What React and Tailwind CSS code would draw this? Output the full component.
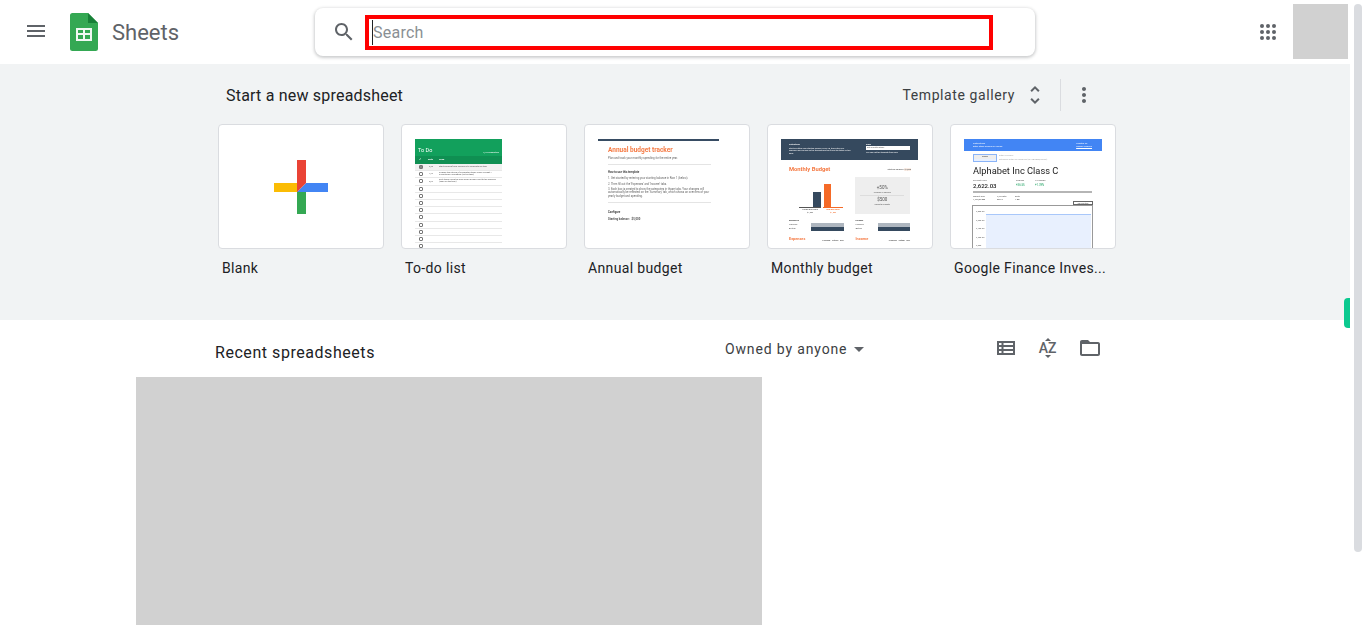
import { useState } from 'react';

const templates = ['Blank', 'To-do list', 'Annual budget', 'Monthly budget', 'Google Finance Inves...'];

const todoRows = [
    ['3/8', 'Start working from column D to complete an item', 'bg-[#f1f1f1]'],
    ['4/9', 'Change the styling of completed items under Format > Conditional Formatting (on the task)', ''],
    ['5/9', 'Sort items using the drop-down arrows next to the heading (seen on the task)', ''],
    ['', '', ''], ['', '', ''], ['', '', ''], ['', '', ''], ['', '', ''], ['', '', ''], ['', '', ''], ['', '', ''], ['', '', ''],
];

function Icon({ d, size = 24, className = 'fill-[#5f6368]' }) {
    return (
        <svg viewBox="0 0 24 24" width={size} height={size} className={`shrink-0 ${className}`}>
            <path d={d} />
        </svg>
    );
}

function SheetsLogo() {
    return (
        <svg viewBox="0 0 28 38" width="28" height="38" className="shrink-0">
            <path d="M2.5 0H18l10 10v25.500a2.500 2.500 0 0 1-2.500 2.500h-23A2.500 2.500 0 0 1 0 35.500v-33A2.500 2.500 0 0 1 2.500 0z" fill="#34a853" />
            <path d="M18 0l10 10h-10z" fill="#188038" />
            <path d="M6 15h16v13H6zM8 17v3h5v-3zm7 0v3h5v-3zM8 22v4h5v-4zm7 0v4h5v-4z" fill="#f1f8f3" fillRule="evenodd" />
        </svg>
    );
}

function BlankPlus() {
    return (
        <svg viewBox="0 0 54 54" width="54" height="54">
            <rect x="0" y="23" width="24" height="9" fill="#fbbc04" />
            <path d="M23 32h9v22h-9z" fill="#34a853" />
            <path d="M23 32l9-9h22v9z" fill="#4285f4" />
            <path d="M23 0h9v23l-9 9z" fill="#ea4335" />
        </svg>
    );
}

function TodoPreview() {
    return (
        <div className="w-[87px] flex flex-col blur-[0.4px]">
            <div className="h-[17px] bg-[#12a05c] flex items-end justify-between px-[3px] pb-[1px] text-white">
                <span className="text-[5.500px] leading-[9px]">To Do</span>
                <span className="text-[2.500px] leading-[5px]">1/3 completed</span>
            </div>
            <div className="h-[8px] bg-[#0f8f52] flex items-center text-white text-[2.500px] font-bold px-[4px]">
                <span className="w-[9px]">✓</span>
                <span className="w-[11px]">Date</span>
                <span>Task</span>
            </div>
            {todoRows.map((row, i) => (
                <div key={i} className={`h-[7.200px] flex items-center border-b border-[#e8e8e8] px-[4px] ${row[2]}`}>
                    <span className={`w-[4px] h-[4px] border-[0.5px] border-[#777] rounded-[1px] shrink-0 ${i === 0 ? 'bg-[#888]' : ''}`} />
                    <span className="w-[16px] text-center text-[2.500px] text-[#555] shrink-0">{row[0]}</span>
                    <span className="text-[2.200px] leading-[2.400px] text-[#555]">{row[1]}</span>
                </div>
            ))}
        </div>
    );
}

function AnnualPreview() {
    return (
        <div className="w-[121px] flex flex-col blur-[0.4px] text-[#666]">
            <div className="h-[2px] bg-[#374c63]" />
            <div className="pl-[10px] pr-[8px] flex flex-col">
                <p className="mt-[5px] text-[6.500px] leading-[8px] font-bold text-[#f57b45]">Annual budget tracker</p>
                <p className="mt-[2px] text-[2.800px] leading-[4px]">Plan and track your monthly spending for the entire year.</p>
                <div className="mt-[4px] h-px bg-[#e4e4e4]" />
                <p className="mt-[5px] text-[2.800px] leading-[4px] font-bold text-[#444]">How to use this template</p>
                <p className="mt-[2px] text-[2.800px] leading-[4px]">1. Get started by entering your starting balance in Row 1 (below).</p>
                <p className="mt-[2px] text-[2.800px] leading-[4px]">2. Then fill out the 'Expenses' and 'Income' tabs.</p>
                <p className="mt-[2px] text-[2.800px] leading-[3.300px]">3. Each box is created to show the categories in those tabs. Your changes will automatically be reflected on the 'Summary' tab, which shows an overview of your yearly budget and spending.</p>
                <div className="mt-[4px] h-px bg-[#e4e4e4]" />
                <p className="mt-[7px] text-[2.800px] leading-[4px] font-bold text-[#444]">Configure</p>
                <p className="mt-[3px] text-[2.800px] leading-[4px] font-bold text-[#555]">Starting balance: &nbsp; $5,000</p>
            </div>
        </div>
    );
}

function MonthlyPreview() {
    return (
        <div className="w-[137px] flex flex-col blur-[0.4px] text-[#555]">
            <div className="h-[21px] bg-[#35495e] flex justify-between px-[8px] pt-[4px] text-white">
                <div className="w-[62px] text-[2px] leading-[2.600px]">
                    <p className="font-bold">Instructions</p>
                    <p className="mt-px">Start by setting your starting balance in cell L8, then enter your expenses and income on the transactions tab to see the totals on this page</p>
                </div>
                <div className="w-[44px] text-[2px] leading-[2.600px]">
                    <p className="font-bold">Email</p>
                    <p className="bg-white text-[#555] h-[4px] px-px">Set up notifications</p>
                    <p className="mt-px">You can edit the template from here</p>
                </div>
            </div>
            <div className="flex justify-between items-center mt-[5px] pl-[8px] pr-[7px]">
                <span className="text-[5.800px] leading-[9px] font-bold text-[#f57b45]">Monthly Budget</span>
                <span className="text-[2.200px] text-[#444]">Starting balance: <span className="bg-[#fbeee6]">$1,000</span></span>
            </div>
            <div className="flex mt-[3px] px-[8px] gap-[5px]">
                <div className="w-[61px] h-[37px] flex items-end gap-[2px] pl-[10px]">
                    <div className="flex flex-col items-end">
                        <div className="w-[8px] h-[15px] bg-[#35495e]" />
                        <span className="w-[22px] text-center text-[2px] leading-[3px] font-bold border-t-[0.5px] border-[#555]">START BALANCE</span>
                        <span className="w-[22px] text-center text-[2px] leading-[3px]">$1,000</span>
                    </div>
                    <div className="flex flex-col items-start">
                        <div className="ml-[1px] w-[7px] h-[23px] bg-[#f56a27]" />
                        <span className="w-[20px] text-center text-[2px] leading-[3px] font-bold text-[#f56a27] border-t-[0.5px] border-[#f56a27]">END BALANCE</span>
                        <span className="w-[20px] text-center text-[2px] leading-[3px] text-[#f56a27]">$1,500</span>
                    </div>
                </div>
                <div className="w-[56px] h-[37px] bg-[#eeeeee] flex flex-col items-center justify-center">
                    <span className="text-[4.500px] leading-[6px]">+50%</span>
                    <span className="text-[2px] leading-[3px]">Increase in savings</span>
                    <div className="w-[44px] h-px bg-[#ddd] my-px" />
                    <span className="text-[4.500px] leading-[6px]">$500</span>
                    <span className="text-[2px] leading-[3px]">Saved this month</span>
                </div>
            </div>
            <div className="grid grid-cols-2 gap-[12px] px-[8px] mt-[5px] text-[2.300px] leading-[4px]">
                {['Expenses', 'Income'].map((label) => (
                    <div key={label}>
                        <p className="font-bold text-[#333]">{label}</p>
                        <div className="flex items-center"><span className="w-[22px] shrink-0">Planned</span><div className="h-[3.500px] w-full bg-[#aeb6bf]" /></div>
                        <div className="flex items-center"><span className="w-[22px] shrink-0">Actual</span><div className="h-[3.500px] w-full bg-[#35495e]" /></div>
                    </div>
                ))}
            </div>
            <div className="grid grid-cols-2 gap-[12px] px-[8px] mt-[5px]">
                {['Expenses', 'Income'].map((label) => (
                    <div key={label} className="flex justify-between">
                        <p className="text-[3.800px] leading-[5px] font-bold text-[#f57b45]">{label}</p>
                        <p className="text-[2.200px] leading-[9px] font-bold">Planned &nbsp; Actual &nbsp; Diff</p>
                    </div>
                ))}
            </div>
        </div>
    );
}

function FinancePreview() {
    return (
        <div className="w-[138px] flex flex-col blur-[0.35px] text-[#555]">
            <div className="h-[12px] bg-[#4285f4] flex justify-between items-center pl-[9px] pr-[10px] text-white text-[2.300px] leading-[3px]">
                <div><p>Instructions</p><p>Enter stock symbol in cell B5</p></div>
                <div><p>Created on</p><p className="underline">Google Finance</p></div>
            </div>
            <div className="flex flex-col pl-[9px] pr-[8px]">
                <div className="mt-[3px] flex items-start">
                    <div className="w-[24px] h-[8px] border-[0.5px] border-[#8ab4f8] bg-[#e8f0fe]">
                        <p className="text-[2.200px] leading-[4px] text-center bg-[#eee] font-bold">GOOG</p>
                    </div>
                    <div className="ml-[2px] text-[2.200px] leading-[4px] text-[#aaa]">
                        <p>enter a symbol</p>
                        <p>optionally enter an exchange (ex: NASDAQ:GOOG)</p>
                    </div>
                </div>
                <p className="mt-[3px] text-[9.300px] leading-[12px] text-[#222]">Alphabet Inc Class C</p>
                <div className="mt-[2px] flex">
                    <div className="w-[43px]"><p className="text-[2.400px] leading-[3px]">Current Price</p><p className="text-[6px] leading-[7px] text-[#222] font-medium">2,622.03</p></div>
                    <div className="w-[19px]"><p className="text-[2.400px] leading-[3px]">Change</p><p className="text-[2.800px] leading-[7px] text-[#0f9d58]">+36.55</p></div>
                    <div><p className="text-[2.400px] leading-[3px]">% Change</p><p className="text-[2.800px] leading-[7px] text-[#0f9d58]">+1.39%</p></div>
                </div>
                <div className="mt-[2px] h-[2px] w-[119px] bg-[#b5b5b5]" />
                <div className="mt-[2px] flex gap-[4px] text-[2.300px] leading-[3px]">
                    <div className="w-[20px]"><p>Market Cap</p><p className="text-[#222]">1,742,279M</p></div>
                    <div className="w-[14px]"><p>P/E Ratio</p><p className="text-[#222]">25.74</p></div>
                    <div><p>Beta</p><p className="text-[#222]">1.06</p></div>
                </div>
                <div className="w-[120px] flex justify-end">
                    <span className="w-[20px] h-[4px] border-[0.5px] border-[#666] text-[2.200px] leading-[3px] text-center">30 Minutes</span>
                </div>
                <div className="-ml-px w-[121px] h-[50px] border-[1.5px] border-[#999] flex pt-[2px] pr-[1px]">
                    <div className="w-[13px] pl-[3px] text-[2.200px] leading-[8.500px] text-[#666]">
                        <p>2,800.00</p>
                        <p>2,600.00</p>
                        <p>2,400.00</p>
                        <p>2,200.00</p>
                        <p>2,000</p>
                    </div>
                    <div className="flex-1 flex flex-col">
                        <div className="h-[6px]" />
                        <div className="flex-1 border-t border-[#a8c7fa] bg-[#e8f0fe] border-b-[1px] border-b-[#bbb]" />
                    </div>
                </div>
            </div>
        </div>
    );
}

const previews = [null, <TodoPreview />, <AnnualPreview />, <MonthlyPreview />, <FinancePreview />];

function TemplateCard({ name, index }) {
    return (
        <div className="w-[166px] shrink-0">
            {index === 0 ? (
                <div className="h-[125px] bg-white border border-[#dadce0] rounded-[4px] flex items-center justify-center">
                    <BlankPlus />
                </div>
            ) : (
                <div className="h-[125px] bg-white border border-[#dadce0] rounded-[4px] overflow-hidden pl-[13px] pt-[14px]">
                    {previews[index]}
                </div>
            )}
            <p className="mt-[9px] pl-[4px] text-[14px] leading-[20px] text-[#202124] tracking-[0.35px] whitespace-nowrap">{name}</p>
        </div>
    );
}

export default function App() {
    const [query, setQuery] = useState('');

    return (
        <div className="relative w-[1366px] h-[625px] overflow-hidden bg-white flex [font-family:Roboto,sans-serif]">
            <div className="w-[1350px] shrink-0 flex flex-col">
                {/* Header */}
                <header className="h-[64px] flex items-start">
                    <div className="w-[315px] h-[62px] shrink-0 flex items-center pl-[24px]">
                        <Icon d="M3 18h18v-2H3v2zm0-5h18v-2H3v2zm0-7v2h18V6H3z" />
                        <div className="ml-[22px] mt-[2px]"><SheetsLogo /></div>
                        <span className="ml-[14px] mt-[3px] text-[22px] leading-[28px] text-[#5f6368]">Sheets</span>
                    </div>
                    <div className="mt-[8px] w-[720px] h-[48px] shrink-0 bg-white rounded-[8px] shadow-[0_1px_3px_1px_rgba(60,64,67,0.25)] flex items-center pl-[17px]">
                        <Icon d="M15.500 14h-.79l-.28-.27C15.410 12.590 16 11.110 16 9.500 16 5.910 13.090 3 9.500 3S3 5.910 3 9.500 5.910 16 9.500 16c1.610 0 3.090-.59 4.230-1.570l.27.28v.79l5 4.990L20.490 19l-4.990-5zm-6 0C7.010 14 5 11.990 5 9.500S7.010 5 9.500 5 14 7.010 14 9.500 11.990 14 9.500 14z" />
                        <div className="ml-[9px] mt-[1px] w-[628px] h-[35px] border-[4px] border-[#ff0000] flex items-center pl-[3px]">
                            <input
                                value={query}
                                onChange={(e) => setQuery(e.target.value)}
                                placeholder="Search"
                                className="w-full h-[25px] border-l border-[#202124] text-[16px] tracking-[0.25px] outline-none placeholder:text-[#8a8f94]"
                            />
                        </div>
                    </div>
                    <div className="flex-1 h-[64px] flex items-start justify-end pr-[2px]">
                        <div className="mt-[24px] mr-[17px] grid grid-cols-3 gap-[2px]">
                            {[0, 1, 2, 3, 4, 5, 6, 7, 8].map((dot) => (
                                <span key={dot} className="w-[4px] h-[4px] rounded-full bg-[#5f6368]" />
                            ))}
                        </div>
                        <div className="mt-[4px] w-[55px] h-[55px] bg-[#d1d1d1]" />
                    </div>
                </header>

                {/* Templates */}
                <section className="h-[256px] shrink-0 bg-[#f1f3f4] pl-[218px]">
                    <div className="w-[898px] h-[60px] flex items-center pl-[8px] pr-[20px] pt-[2px]">
                        <h2 className="mt-[1px] text-[16px] leading-[24px] text-[#202124] tracking-[0.2px]">Start a new spreadsheet</h2>
                        <div className="flex-1" />
                        <span className="text-[14px] leading-[20px] text-[#3c4043] tracking-[0.6px]">Template gallery</span>
                        <div className="ml-[8px]">
                            <Icon d="M12 5.830L15.170 9l1.410-1.410L12 3 7.410 7.590 8.830 9 12 5.830zm0 12.340L8.830 15l-1.410 1.410L12 21l4.590-4.590L15.170 15 12 18.170z" />
                        </div>
                        <div className="ml-[13px] mr-[11px] w-px h-[32px] bg-[#dadce0]" />
                        <Icon d="M12 8c1.100 0 2-.9 2-2s-.9-2-2-2-2 .9-2 2 .9 2 2 2zm0 2c-1.100 0-2 .9-2 2s.9 2 2 2 2-.9 2-2-.9-2-2-2zm0 6c-1.100 0-2 .9-2 2s.9 2 2 2 2-.9 2-2-.9-2-2-2z" />
                    </div>
                    <div className="flex gap-[17px]">
                        {templates.map((name, i) => (
                            <TemplateCard key={name} name={name} index={i} />
                        ))}
                    </div>
                </section>

                {/* Recent */}
                <section className="flex-1 min-h-0 flex flex-col">
                    <div className="h-[57px] shrink-0 flex items-start">
                        <h2 className="ml-[215px] mt-[21px] w-[510px] text-[16px] leading-[24px] text-[#202124] tracking-[0.55px]">Recent spreadsheets</h2>
                        <div className="mt-[19px] w-[272px] h-[20px] flex items-center">
                            <span className="text-[14px] leading-[20px] text-[#3c4043] tracking-[0.85px]">Owned by anyone</span>
                            <span className="ml-[7px] w-0 h-0 border-x-[5px] border-x-transparent border-t-[5px] border-t-[#5f6368]" />
                        </div>
                        <div className="mt-[16px] flex items-center">
                            <svg viewBox="0 0 18 14" width="18" height="14" className="shrink-0">
                                <path d="M0 0h18v14H0zM2 2v2h2.500V2zm4.500 0v2H16V2zM2 6v2h2.500V6zm4.500 0v2H16V6zM2 10v2h2.500v-2zm4.500 0v2H16v-2z" fill="#5f6368" fillRule="evenodd" />
                            </svg>
                            <div className="ml-[23px] w-[19px] flex flex-col items-center text-[#5f6368]">
                                <span className="w-0 h-0 border-x-[3px] border-x-transparent border-b-[3px] border-b-[#5f6368]" />
                                <span className="my-[1px] text-[14px] leading-[12px] font-medium">AZ</span>
                                <span className="w-0 h-0 border-x-[3px] border-x-transparent border-t-[3px] border-t-[#5f6368]" />
                            </div>
                            <div className="ml-[21px]">
                                <Icon d="M20 6h-8l-2-2H4c-1.100 0-1.990.9-1.990 2L2 18c0 1.100.9 2 2 2h16c1.100 0 2-.9 2-2V8c0-1.100-.9-2-2-2zm0 12H4V8h16v10z" />
                            </div>
                        </div>
                    </div>
                    <div className="ml-[136px] w-[626px] flex-1 bg-[#d1d1d1]" />
                </section>
            </div>

            {/* Scrollbar */}
            <div className="ml-[4px] mt-[4px] w-[8px] h-[548px] rounded-[4px] bg-[#dadce0]" />

            {/* Side panel handle */}
            <div className="absolute left-[1344px] top-[298px] w-[6px] h-[30px] rounded-l-[4px] bg-[#0bc98f]" />
        </div>
    );
}
